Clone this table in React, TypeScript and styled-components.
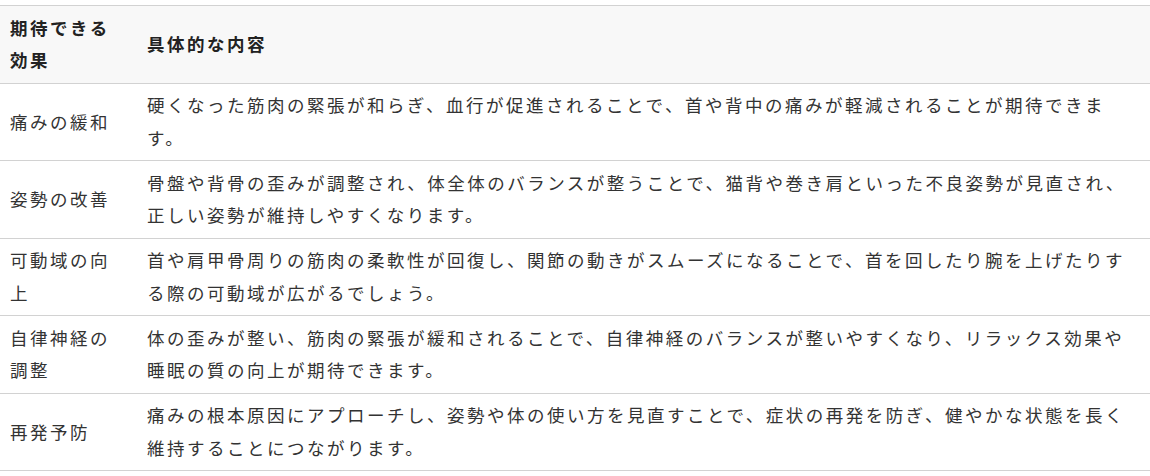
import React from 'react';
import styled, { createGlobalStyle } from 'styled-components';

/**
 * Data
 */
interface IRow {
    effect: string,
    detail: string,
}

const rows: IRow[] = [
    {
        effect: '痛みの緩和',
        detail: '硬くなった筋肉の緊張が和らぎ、血行が促進されることで、首や背中の痛みが軽減されることが期待できます。',
    },
    {
        effect: '姿勢の改善',
        detail: '骨盤や背骨の歪みが調整され、体全体のバランスが整うことで、猫背や巻き肩といった不良姿勢が見直され、正しい姿勢が維持しやすくなります。',
    },
    {
        effect: '可動域の向上',
        detail: '首や肩甲骨周りの筋肉の柔軟性が回復し、関節の動きがスムーズになることで、首を回したり腕を上げたりする際の可動域が広がるでしょう。',
    },
    {
        effect: '自律神経の調整',
        detail: '体の歪みが整い、筋肉の緊張が緩和されることで、自律神経のバランスが整いやすくなり、リラックス効果や睡眠の質の向上が期待できます。',
    },
    {
        effect: '再発予防',
        detail: '痛みの根本原因にアプローチし、姿勢や体の使い方を見直すことで、症状の再発を防ぎ、健やかな状態を長く維持することにつながります。',
    },
];

/**
 * Styles
 */
const GlobalStyle = createGlobalStyle`
    html, body {
        margin: 0;
        padding: 0;
        background: #ffffff;
    }

    body {
        font-family: "Noto Sans CJK JP", "Noto Sans", sans-serif;
        color: #333333;
    }
`;

const Wrapper = styled.div`
    padding-top: 5px;
`;

const Table = styled.table`
    width: 100%;
    border-collapse: collapse;
    font-size: 17.5px;
    line-height: 32.5px;
    letter-spacing: 2.5px;
`;

const HeadRow = styled.tr`
    background: #f8f8f8;
`;

const Cell = styled.td<{ $first?: boolean, $head?: boolean }>`
    width: ${(props) => (props.$first ? '117px' : 'auto')};
    padding: 5.75px 10px;
    border-top: 1px solid #d2d2d2;
    border-bottom: 1px solid #d2d2d2;
    text-align: left;
    vertical-align: middle;
    font-weight: ${(props) => (props.$head ? 700 : 400)};
    color: ${(props) => (props.$head ? '#222222' : '#333333')};
`;

/**
 * Main Component
 */
const App = () => {
    return (
        <Wrapper>
            <GlobalStyle />
            <Table>
                <thead>
                    <HeadRow>
                        <Cell as="th" $first $head>期待できる効果</Cell>
                        <Cell as="th" $head>具体的な内容</Cell>
                    </HeadRow>
                </thead>
                <tbody>
                    {rows.map((row) => (
                        <tr key={row.effect}>
                            <Cell $first>{row.effect}</Cell>
                            <Cell>{row.detail}</Cell>
                        </tr>
                    ))}
                </tbody>
            </Table>
        </Wrapper>
    );
}

export default App;
